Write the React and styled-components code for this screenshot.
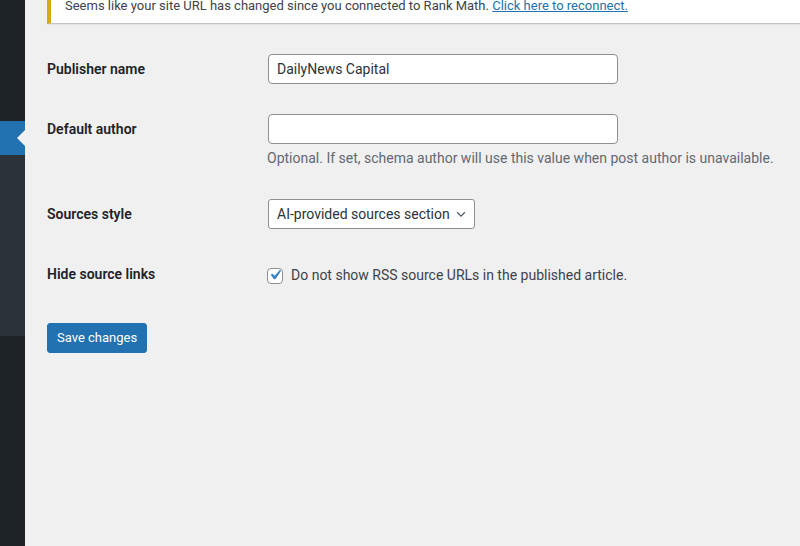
import React from 'react'
import styled, { createGlobalStyle } from 'styled-components'

const GlobalStyle = createGlobalStyle`
  html, body {
    margin: 0;
    padding: 0;
    background: #f0f0f1;
    overflow: hidden;
  }
  body {
    font-family: Roboto, "Liberation Sans", sans-serif;
    color: #3c434a;
    font-size: 13px;
    line-height: 1.4;
  }
`

const Page = styled.div`
  display: flex;
  width: 800px;
  height: 546px;
  overflow: hidden;
  background: #f0f0f1;
`

const Sidebar = styled.nav`
  flex: 0 0 25px;
  display: flex;
  flex-direction: column;
  background: #1d2327;
`

const SideBlock = styled.div`
  height: ${({ h }) => h}px;
  flex: 0 0 auto;
  background: ${({ bg }) => bg};
  position: relative;
`

const CurrentArrow = styled.span`
  position: absolute;
  right: 0;
  top: 50%;
  margin-top: -8px;
  border: 8px solid transparent;
  border-right-color: #f0f0f1;
  border-left-width: 0;
`

const Content = styled.main`
  flex: 1;
  min-width: 0;
  padding-left: 22px;
`

const Notice = styled.div`
  margin-top: -12px;
  margin-right: -20px;
  background: #fff;
  border: 1px solid #c3c4c7;
  border-left: 4px solid #dba617;
  box-shadow: 0 1px 1px rgba(0, 0, 0, 0.04);
  padding: 1px 14px;

  p {
    margin: 6px 0;
    font-size: 13px;
    line-height: 20px;
    color: #3c434a;
  }

  a {
    color: #2271b1;
    text-decoration: underline;
  }
`

const FormTable = styled.div`
  margin-top: 15px;
  display: flex;
  flex-direction: column;
`

const Row = styled.div`
  display: flex;
  align-items: flex-start;
`

const Label = styled.div`
  flex: 0 0 200px;
  padding: 20.5px 10px 20.5px 0;
  font-size: 14px;
  font-weight: 600;
  line-height: 1.3;
  color: #1d2327;
`

const Field = styled.div`
  padding: 15px 10px;
  font-size: 14px;
  line-height: 1.5;
`

const TextInput = styled.input`
  box-sizing: border-box;
  display: block;
  width: 350px;
  height: 30px;
  margin: 0 1px;
  padding: 0 8px;
  border: 1px solid #8c8f94;
  border-radius: 4px;
  background: #fff;
  font-family: inherit;
  font-size: 14px;
  color: #2c3338;
  outline: none;
`

const Description = styled.p`
  margin: 4px 0 0;
  font-size: 14px;
  line-height: 21px;
  color: #646970;
`

const SelectBox = styled.div`
  box-sizing: border-box;
  display: inline-flex;
  align-items: center;
  gap: 4px;
  height: 30px;
  margin: 0 1px;
  padding: 0 6px 0 8px;
  border: 1px solid #8c8f94;
  border-radius: 3px;
  background: #fff;
  font-size: 14px;
  color: #2c3338;
  white-space: nowrap;
`

const CheckLabel = styled.label`
  display: flex;
  align-items: center;
  gap: 8px;
  padding-top: 6px;
  font-size: 14px;
  color: #3c434a;
`

const CheckBox = styled.span`
  box-sizing: border-box;
  display: inline-flex;
  align-items: center;
  justify-content: center;
  width: 16px;
  height: 16px;
  border: 1px solid #8c8f94;
  border-radius: 4px;
  background: #fff;

  svg {
    flex: 0 0 auto;
    margin: -1px 0 0 -1px;
  }
`

const Submit = styled.p`
  margin: 20px 0 0;
  padding: 0;
`

const Button = styled.button`
  box-sizing: border-box;
  height: 30px;
  padding: 0 9px;
  border: 1px solid #2271b1;
  border-radius: 3px;
  background: #2271b1;
  color: #fff;
  font-family: inherit;
  font-size: 13px;
  line-height: 28px;
  cursor: pointer;
`

function Chevron() {
  return (
    <svg width="14" height="14" viewBox="0 0 20 20">
      <path d="M4.5 7.5l5.5 5.5 5.5-5.5" fill="none" stroke="#50575e" strokeWidth="1.8" />
    </svg>
  )
}

function Check() {
  return (
    <svg width="20" height="20" viewBox="0 0 20 20">
      <path d="M14.83 4.89l1.34.94-5.81 8.38H9.02L5.78 9.67l1.34-1.25 2.57 2.4z" fill="#3582c4" />
    </svg>
  )
}

export default function App() {
  return (
    <>
      <GlobalStyle />
      <Page>
        <Sidebar>
          <SideBlock h={121} bg="#1d2327" />
          <SideBlock h={34} bg="#2271b1">
            <CurrentArrow />
          </SideBlock>
          <SideBlock h={181} bg="#2c3338" />
        </Sidebar>
        <Content>
          <Notice>
            <p>
              Seems like your site URL has changed since you connected to Rank Math.{' '}
              <a href="#reconnect">Click here to reconnect.</a>
            </p>
          </Notice>
          <FormTable>
            <Row>
              <Label>Publisher name</Label>
              <Field>
                <TextInput defaultValue="DailyNews Capital" />
              </Field>
            </Row>
            <Row>
              <Label>Default author</Label>
              <Field>
                <TextInput defaultValue="" />
                <Description>
                  Optional. If set, schema author will use this value when post author is unavailable.
                </Description>
              </Field>
            </Row>
            <Row>
              <Label>Sources style</Label>
              <Field>
                <SelectBox>
                  AI-provided sources section
                  <Chevron />
                </SelectBox>
              </Field>
            </Row>
            <Row>
              <Label>Hide source links</Label>
              <Field>
                <CheckLabel>
                  <CheckBox>
                    <Check />
                  </CheckBox>
                  Do not show RSS source URLs in the published article.
                </CheckLabel>
              </Field>
            </Row>
          </FormTable>
          <Submit>
            <Button>Save changes</Button>
          </Submit>
        </Content>
      </Page>
    </>
  )
}
